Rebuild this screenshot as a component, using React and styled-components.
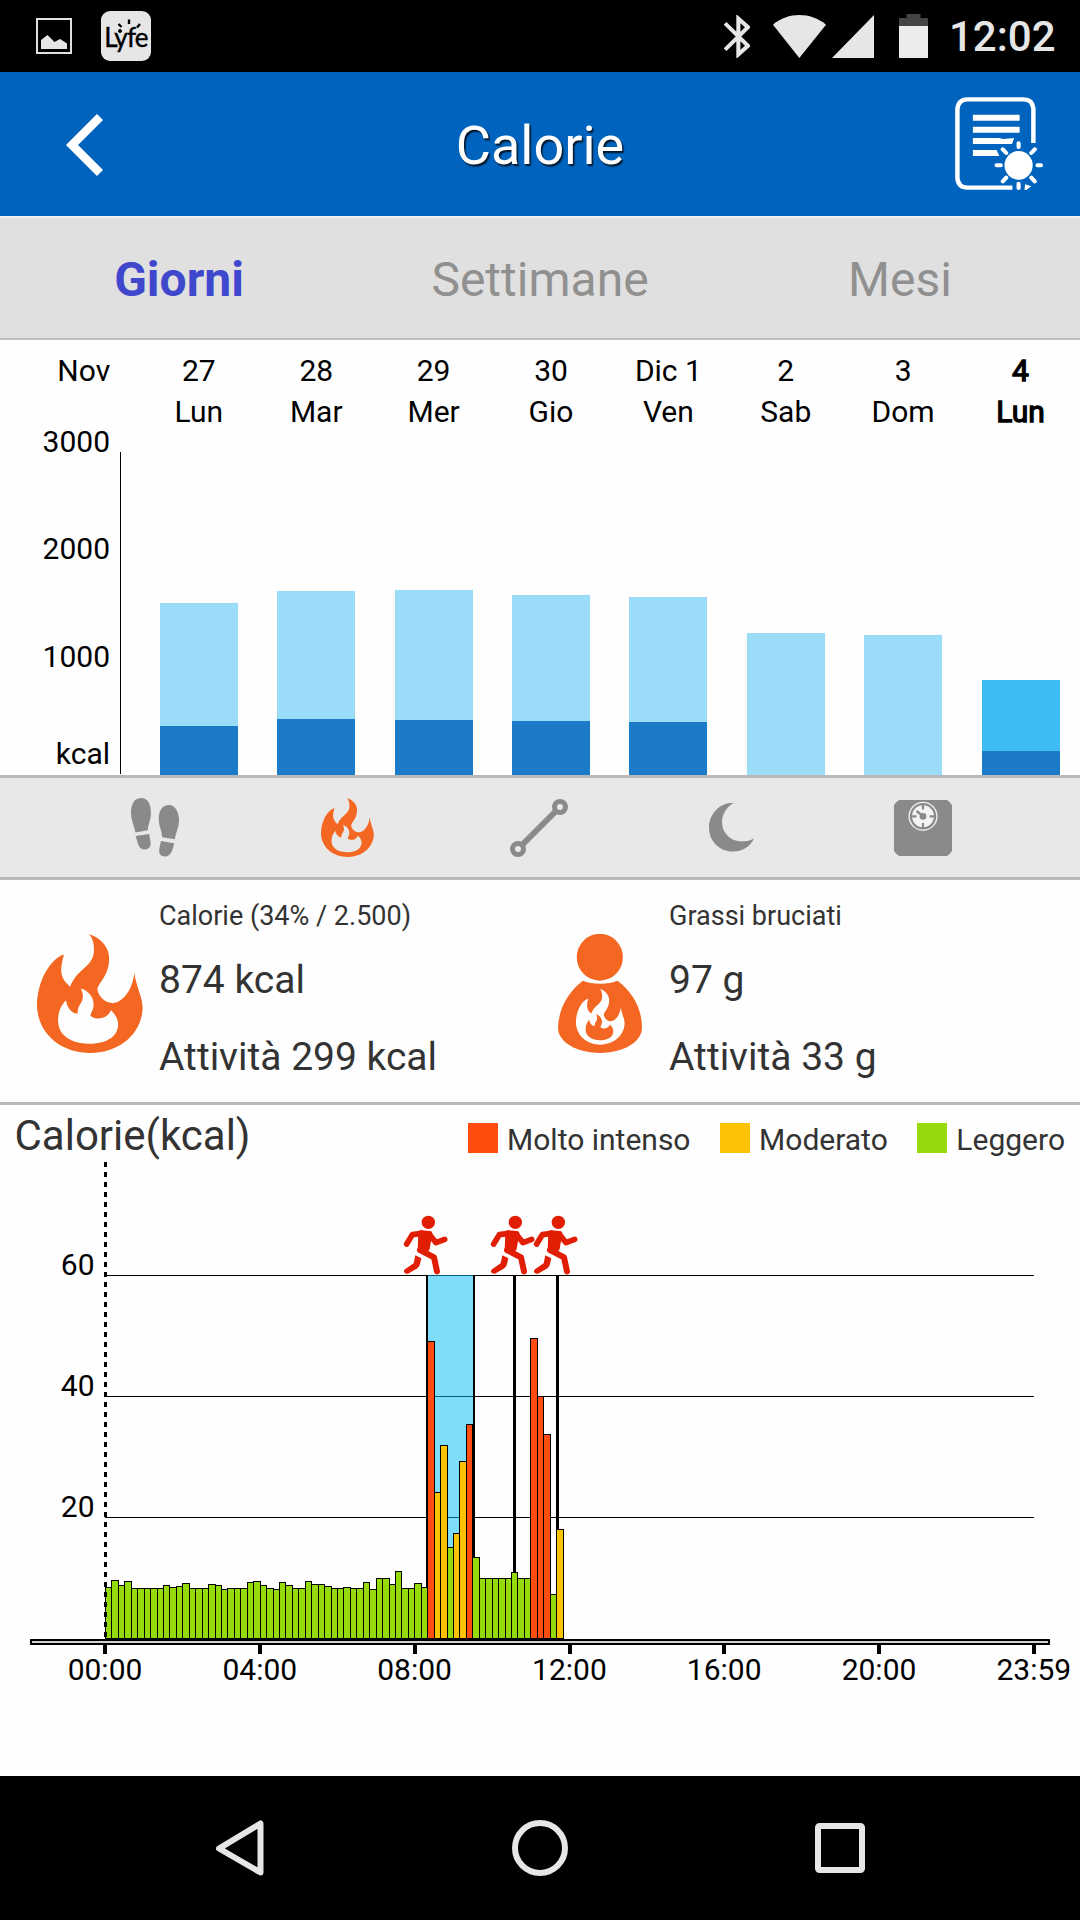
import React from "react";
import styled, { createGlobalStyle } from "styled-components";

const Global = createGlobalStyle`
  * { box-sizing: border-box; }
  body { margin: 0; background: #fff; font-family: Roboto, sans-serif; }
  svg { display: block; flex: none; }
`;

const Screen = styled.div`
  width: 1080px;
  height: 1920px;
  display: flex;
  flex-direction: column;
  background: #fefefe;
  overflow: hidden;
`;

/* ---------- status bar ---------- */
const StatusBar = styled.div`
  height: 72px;
  background: #000;
  display: flex;
  justify-content: space-between;
  padding: 0 25px 0 36px;
`;
const StatusLeft = styled.div`
  display: flex;
  align-items: center;
  gap: 29px;
`;
const StatusRight = styled.div`
  display: flex;
  align-items: center;
`;
const StatusIcon = styled.svg`
  margin-right: ${(p) => p.$gap}px;
`;
const LyfeBadge = styled.div`
  position: relative;
  width: 50px;
  height: 50px;
  border-radius: 9px;
  background: #e6e6e6;
  display: flex;
  justify-content: center;
  padding-top: 9px;
  font-family: Lato, sans-serif;
  font-size: 26px;
  line-height: 34px;
  letter-spacing: -0.8px;
  color: #000;
  -webkit-text-stroke: 0.4px #000;
`;
const Rays = styled.svg`
  position: absolute;
  left: 0;
  top: 0;
`;
const Clock = styled.div`
  font-size: 42px;
  font-weight: 500;
  line-height: 76px;
  padding-top: 2px;
  color: #e6e6e6;
  width: 106px;
`;

/* ---------- header ---------- */
const Header = styled.header`
  height: 146px;
  background: #0063bd;
  border-bottom: 2px solid #f2f2f2;
  display: grid;
  grid-template-columns: 170px 1fr 170px;
  align-items: center;
`;
const Title = styled.h1`
  margin: 0;
  text-align: center;
  color: #fff;
  font-size: 54px;
  font-weight: 400;
  line-height: 64px;
  padding-top: 3px;
  text-shadow: 1.5px 1.5px 1.5px rgba(0, 0, 0, 0.8);
`;
const HeaderSlot = styled.div`
  display: flex;
  justify-content: center;
  padding-left: ${(p) => p.$shift || 0}px;
  padding-top: ${(p) => p.$down || 0}px;
  padding-bottom: ${(p) => p.$up || 0}px;
`;

/* ---------- tabs ---------- */
const Tabs = styled.nav`
  height: 122px;
  background: #e0e0e0;
  border-bottom: 2px solid #bfbfbf;
  display: grid;
  grid-template-columns: repeat(3, 1fr);
`;
const Tab = styled.div`
  text-align: center;
  font-size: 48px;
  line-height: 123px;
  font-weight: ${(p) => (p.$active ? 700 : 400)};
  padding-right: ${(p) => (p.$active ? 2 : 0)}px;
  color: ${(p) => (p.$active ? "#3f48cc" : "#909090")};
`;

/* ---------- daily bars ---------- */
const DailyChart = styled.section`
  height: 435px;
  font-size: 30px;
  color: #000;
`;
const DayHeader = styled.div`
  height: 112px;
  padding-top: 10px;
  display: grid;
  grid-template-columns: 140.2px 939px;
  line-height: 41px;
`;
const MonthLabel = styled.div`
  padding-right: 30px;
  text-align: right;
`;
const DayColumns = styled.div`
  display: grid;
  grid-template-columns: repeat(8, 1fr);
`;
const Day = styled.div`
  text-align: center;
  white-space: nowrap;
  -webkit-text-stroke: ${(p) => (p.$current ? "1.3px #000" : "0")};
`;
const DayPlot = styled.div`
  height: 323px;
  display: grid;
  grid-template-columns: 110px 30.2px 939px;
`;
const Scale = styled.div`
  display: grid;
  grid-template-rows: 107px 108px 97px 36px;
  margin-top: -28px;
  height: 348px;
  line-height: 36px;
  text-align: right;
`;
const AxisLine = styled.div`
  margin-left: 10px;
  border-left: 1px solid #000;
  height: 322px;
`;
const BarColumns = styled(DayColumns)`
  align-items: end;
  justify-items: center;
`;
const Bar = styled.div`
  width: 78px;
  display: flex;
  flex-direction: column;
  justify-content: flex-end;
  height: ${(p) => p.$total}px;
  background: ${(p) => (p.$current ? "#3fbbf4" : "#9bdcf9")};
`;
const ActiveBar = styled.div`
  height: ${(p) => p.$value}px;
  background: #1c7bc9;
`;

/* ---------- metric selector ---------- */
const MetricBar = styled.nav`
  height: 105px;
  background: #e8e8e8;
  border-top: 3px solid #b9b9b9;
  border-bottom: 3px solid #b9b9b9;
  padding: 0 61px 0 59px;
  display: grid;
  grid-template-columns: repeat(5, 1fr);
  align-items: center;
  justify-items: center;
`;

/* ---------- summary ---------- */
const Summary = styled.section`
  height: 225px;
  border-bottom: 3px solid #b9b9b9;
  display: grid;
  grid-template-columns: 510px 570px;
`;
const SummaryItem = styled.div`
  display: grid;
  grid-template-columns: 159px 1fr;
`;
const SummaryIcon = styled.div`
  padding: 53.5px 0 0 21px;
  display: flex;
  justify-content: center;
`;
const SummaryText = styled.div`
  padding-top: 20px;
  color: #333;
  white-space: nowrap;
`;
const SummaryLabel = styled.div`
  font-size: 27px;
  line-height: 32px;
  margin-bottom: 25px;
`;
const SummaryValue = styled.div`
  font-size: 39px;
  line-height: 46px;
  margin-bottom: 31px;
`;

/* ---------- intraday chart ---------- */
const Intraday = styled.section`
  flex: 1;
`;
const ChartHeader = styled.div`
  height: 57px;
  display: flex;
  justify-content: space-between;
  color: #333;
  padding: 6px 15px 0 14.5px;
`;
const ChartTitle = styled.div`
  font-size: 42px;
  line-height: 50px;
`;
const Legend = styled.div`
  display: flex;
  gap: 29.6px;
  padding-top: 12px;
`;
const LegendItem = styled.div`
  display: flex;
  gap: 9px;
  font-size: 30px;
  line-height: 34px;
`;
const Swatch = styled.span`
  width: 30px;
  height: 30px;
  background: ${(p) => p.$color};
`;
const PlotSvg = styled.svg`
  font-size: 30px;
  fill: #000;
`;

/* ---------- navigation ---------- */
const NavBar = styled.footer`
  height: 144px;
  background: #000;
  padding: 0 90px;
  display: grid;
  grid-template-columns: repeat(3, 1fr);
  align-items: center;
  justify-items: center;
`;

const ORANGE = "#f46722";
const GREY = "#8a8a8a";
const RED = "#ff4d10";
const YELLOW = "#fcc305";
const GREEN = "#95db0b";

const FLAME =
  "M258 490C300 505 317 535 317 563C317 617 283 637 283 657C287 680 308 697 328 697C358 695 385 655 390 607C396 650 414 680 414 712C411 790 345 846 262 846C180 846 108 790 108 700C110 630 145 565 186 551C170 610 180 625 204 648C225 590 273 590 273 537C273 515 268 500 258 490Z" +
  "M192 688C174 707 169 728 169 750C170 795 210 818 260 818C305 818 341 800 343 762C343 745 335 730 322 718C318 727 313 735 300 740C290 744 275 745 263 735C263 725 272 718 272 700C272 680 258 660 235 653C238 660 241 667 241 677C241 698 224 702 226 728C210 728 195 712 192 688Z";

const Flame = ({ w, h }) => (
  <svg width={w} height={h} viewBox="108 490 307 356" preserveAspectRatio="none">
    <path d={FLAME} fill={ORANGE} fillRule="evenodd" />
  </svg>
);

const FatBurn = () => (
  <svg width="84" height="119" viewBox="52 490 244 356" preserveAspectRatio="none">
    <ellipse cx="173.5" cy="559.5" rx="67" ry="70" fill={ORANGE} />
    <path
      fill={ORANGE}
      d="M124 630C150 642 200 642 225 630C270 665 296 715 296 770C296 815 240 846 174 846C108 846 52 815 52 770C54 715 80 665 124 630Z"
    />
    <path
      d={FLAME}
      fill="#fff"
      fillRule="evenodd"
      transform="translate(104 654) scale(.4625 .469) translate(-108 -490)"
    />
  </svg>
);

const Footprints = () => (
  <svg width="48" height="58.5" viewBox="383 83 140 176" preserveAspectRatio="none">
    <path
      fill={GREY}
      d="M412 83C432 83 441 100 441 128C441 150 433 160 432 180L396 187C392 165 383 150 383 125C384 98 395 83 412 83ZM397 197L436 191C438 205 441 215 440 225C438 234 430 238 422 238C405 238 402 215 397 197ZM494 104C512 104 523 125 523 150C523 172 514 185 511 207L474 201C473 180 464 170 464 145C464 120 475 104 494 104ZM470 212L509 219C504 240 500 258 483 259C470 259 465 252 465 242C466 230 469 222 470 212Z"
    />
  </svg>
);

const Route = () => (
  <svg width="58" height="58" viewBox="0 0 58 58" fill="none" stroke={GREY}>
    <path d="M12 46L46 12" strokeWidth="6" />
    <circle cx="8" cy="50" r="5.5" strokeWidth="5" />
    <circle cx="50" cy="8" r="5.5" strokeWidth="5" />
  </svg>
);

const Moon = () => (
  <svg width="45" height="48.5" viewBox="492 98 131 145" preserveAspectRatio="none">
    <path
      fill={GREY}
      d="M565 98C520 95 492 135 492 171C492 215 525 243 562 243C590 243 612 228 623 204C610 211 598 213 588 213C555 213 530 188 530 155C530 130 545 107 565 98Z"
    />
  </svg>
);

const BathScale = () => (
  <svg width="58" height="56" viewBox="0 0 58 56">
    <path d="M5 0H53Q56 2 58 5V51Q56 54 53 56H5Q2 54 0 51V5Q2 2 5 0Z" fill={GREY} />
    <circle cx="29" cy="16.3" r="14.6" fill="#efefef" />
    <circle cx="29" cy="16.3" r="13.2" fill={GREY} />
    <circle cx="29" cy="16.3" r="11" fill="#f4f4f4" />
    <g stroke={GREY} strokeWidth="2.2">
      <path d="M29 5V9.5M29 23V28M18 16.3H22.5M35.5 16.3H40" />
      <path d="M22.5 11L29 16" strokeWidth="2.4" />
    </g>
    <circle cx="29" cy="16.3" r="3.4" fill={GREY} />
  </svg>
);

const ReportIcon = () => (
  <svg width="88" height="93" viewBox="1205 292 256 279" preserveAspectRatio="none" fill="none" stroke="#fff">
    <path d="M1433 430V326Q1430 299 1405 299H1241Q1215 299 1212 328V536Q1215 564 1241 564H1372" strokeWidth="13" />
    <path d="M1257 354H1393M1257 390H1393" strokeWidth="18" />
    <path fill="#fff" stroke="none" d="M1257 415H1333L1345 418L1377 415L1371 433H1257ZM1257 451H1326L1334 469H1257Z" />
    <ellipse cx="1390" cy="497" rx="41" ry="43" fill="#fff" stroke="none" />
    <path
      strokeWidth="12"
      strokeLinecap="round"
      d="M1390 431V442M1390 552V565M1326 497H1338M1445 497H1455M1344 449L1354 460M1437 449L1427 460M1344 545L1354 534M1437 545L1427 534"
    />
    <path fill="#fff" stroke="none" d="M1409 554L1427 560L1412 571H1407Z" />
  </svg>
);

const days = [
  ["27", "Lun", 172, 49],
  ["28", "Mar", 184, 56],
  ["29", "Mer", 185, 55],
  ["30", "Gio", 180, 54],
  ["Dic 1", "Ven", 178, 53],
  ["2", "Sab", 142, 0],
  ["3", "Dom", 140, 0],
  ["4", "Lun", 95, 24],
];

/* Bar heights in pixels above the time axis, one per ten minutes. */
const samples = [
  52, 59, 54, 58, 51, 51, 51, 51, 51, 54, 52, 53, 56, 51, 51, 51, 55, 54, 50, 51, 51, 51, 57, 58, 54, 51, 50, 57, 54,
  51, 51, 58, 55, 55, 53, 51, 51, 52, 51, 51, 57, 50, 61, 61, 55, 68, 51, 51, 56, 52, 298, 147, 194, 92, 106, 178, 215,
  82, 61, 61, 61, 61, 61, 67, 61, 61, 301, 243, 205, 45, 110,
];
const intense = new Set([50, 56, 66, 67, 68]);
const moderate = new Set([51, 52, 54, 55, 70]);
const barColor = (i) => (intense.has(i) ? RED : moderate.has(i) ? YELLOW : GREEN);

const BASE = 1639;
const slotX = (i) => Math.round(105 + i * 6.445);

const Runner = ({ dx }) => (
  <g transform={`translate(${380 + dx} 1180) scale(.33333)`} stroke="#e11e04" fill="none" strokeLinecap="round" strokeLinejoin="round">
    <ellipse cx="145" cy="127" rx="20" ry="20" fill="#e11e04" stroke="none" />
    <path d="M80 192L97 164L126 160" strokeWidth="17" />
    <path d="M148 163L168 188L194 178" strokeWidth="17" />
    <path d="M122 158L150 160L142 206L120 212Z" fill="#e11e04" strokeWidth="14" />
    <path d="M120 210L162 232L171 274" strokeWidth="18" />
    <path d="M106 226L124 235L119 256Q117 262 110 266L84 281Q76 283 72 276Q71 270 76 267L101 250Z" fill="#e11e04" stroke="none" />
  </g>
);

const hours = ["00:00", "04:00", "08:00", "12:00", "16:00", "20:00", "23:59"];

const IntradayPlot = () => (
  <PlotSvg width="1080" height="538" viewBox="0 1162 1080 538">
    <g shapeRendering="crispEdges">
      {[1275, 1396, 1517].map((y) => (
        <rect key={y} x="105" y={y} width="929" height="1" />
      ))}
      <rect x="428" y="1275" width="45" height="363" fill="rgba(0,187,243,.5)" />
      <rect x="426" y="1275" width="2" height="363" />
      <rect x="473" y="1275" width="2" height="363" />
      <rect x="513" y="1275" width="3" height="363" />
      <rect x="556" y="1275" width="3" height="363" />
      {samples.map((h, i) => {
        const x = slotX(i);
        const w = slotX(i + 1) - x + 1;
        return (
          <g key={i}>
            <rect x={x} y={BASE - h} width={w} height={h} />
            <rect x={x + 1} y={BASE - h + 1} width={w - 2} height={h - 2} fill={barColor(i)} />
          </g>
        );
      })}
      <path d="M105.5 1162V1639" stroke="#000" strokeWidth="3" strokeDasharray="5 5" />
      <rect x="30" y="1639" width="1020" height="6" />
      <rect x="32" y="1641" width="1016" height="2" fill="#d4d0d4" />
      {hours.map((h, i) => (
        <rect key={h} x={103 + Math.round(i * 154.84)} y="1645" width="4" height="9" />
      ))}
    </g>
    {[["60", 1275], ["40", 1396], ["20", 1517]].map(([t, y]) => (
      <text key={t} x="94.5" y={y} textAnchor="end">{t}</text>
    ))}
    {hours.map((h, i) => (
      <text key={h} x={105 + i * 154.8} y="1680" textAnchor="middle">{h}</text>
    ))}
    <Runner dx={0} />
    <Runner dx={87} />
    <Runner dx={130} />
  </PlotSvg>
);

export default function App() {
  return (
    <>
      <Global />
      <Screen>
        <StatusBar>
          <StatusLeft>
            <svg width="36" height="36" viewBox="0 0 36 36">
              <rect x="1" y="1" width="34" height="34" fill="none" stroke="#e0e0e0" strokeWidth="2" />
              <path d="M5 22L11.5 17L18.5 24L24 21L31 25.5V31H5Z" fill="#e6e6e6" />
            </svg>
            <LyfeBadge>
              Lyfe
              <Rays width="50" height="50" viewBox="0 0 50 50" stroke="#000" strokeWidth="2.4">
                <path d="M17.5 13L20.500 16M28 8.500V13M39 13L36 16.500" />
                <circle cx="19" cy="20" r="1.500" strokeWidth="1" />
              </Rays>
            </LyfeBadge>
          </StatusLeft>
          <StatusRight>
            <StatusIcon $gap={23} width="26" height="43" viewBox="534 44 76 130" preserveAspectRatio="none">
              <path d="M537 69L604 137L576 163V55L604 81L537 149" fill="none" stroke="#e6e6e6" strokeWidth="12" />
            </StatusIcon>
            <StatusIcon $gap={6} width="53" height="43" viewBox="677 42 153 129" preserveAspectRatio="none">
              <path d="M753 171L677 71C720 32.500 786 32.500 830 71Z" fill="#e6e6e6" />
            </StatusIcon>
            <StatusIcon $gap={25} width="42" height="43" viewBox="847 42 123 129" preserveAspectRatio="none">
              <path d="M970 42V171H847Z" fill="#e6e6e6" />
            </StatusIcon>
            <StatusIcon $gap={21} width="29" height="44" viewBox="0 0 29 44">
              <path d="M7.500 0H21.500V4H29V13H0V4H7.500Z" fill="#444" />
              <path d="M0 12H29V44H0Z" fill="#ececec" />
            </StatusIcon>
            <Clock>12:02</Clock>
          </StatusRight>
        </StatusBar>

        <Header>
          <HeaderSlot $down={1}>
            <svg width="38" height="62" viewBox="0 0 38 62">
              <path d="M34 3L6 31L34 59" fill="none" stroke="#fff" strokeWidth="8.500" />
            </svg>
          </HeaderSlot>
          <Title>Calorie</Title>
          <HeaderSlot $shift={8} $up={2}>
            <ReportIcon />
          </HeaderSlot>
        </Header>

        <Tabs>
          <Tab $active>Giorni</Tab>
          <Tab>Settimane</Tab>
          <Tab>Mesi</Tab>
        </Tabs>

        <DailyChart>
          <DayHeader>
            <MonthLabel>Nov</MonthLabel>
            <DayColumns>
              {days.map(([date, name], i) => (
                <Day key={date} $current={i === 7}>
                  <div>{date}</div>
                  <div>{name}</div>
                </Day>
              ))}
            </DayColumns>
          </DayHeader>
          <DayPlot>
            <Scale>
              <span>3000</span>
              <span>2000</span>
              <span>1000</span>
              <span>kcal</span>
            </Scale>
            <AxisLine />
            <BarColumns>
              {days.map(([date, , total, active], i) => (
                <Bar key={date} $total={total} $current={i === 7}>
                  <ActiveBar $value={active} />
                </Bar>
              ))}
            </BarColumns>
          </DayPlot>
        </DailyChart>

        <MetricBar>
          <Footprints />
          <Flame w={53} h={59} />
          <Route />
          <Moon />
          <BathScale />
        </MetricBar>

        <Summary>
          <SummaryItem>
            <SummaryIcon>
              <Flame w={106} h={119} />
            </SummaryIcon>
            <SummaryText>
              <SummaryLabel>Calorie (34% / 2.500)</SummaryLabel>
              <SummaryValue>874 kcal</SummaryValue>
              <SummaryValue>Attività 299 kcal</SummaryValue>
            </SummaryText>
          </SummaryItem>
          <SummaryItem>
            <SummaryIcon>
              <FatBurn />
            </SummaryIcon>
            <SummaryText>
              <SummaryLabel>Grassi bruciati</SummaryLabel>
              <SummaryValue>97 g</SummaryValue>
              <SummaryValue>Attività 33 g</SummaryValue>
            </SummaryText>
          </SummaryItem>
        </Summary>

        <Intraday>
          <ChartHeader>
            <ChartTitle>Calorie(kcal)</ChartTitle>
            <Legend>
              <LegendItem><Swatch $color={RED} />Molto intenso</LegendItem>
              <LegendItem><Swatch $color={YELLOW} />Moderato</LegendItem>
              <LegendItem><Swatch $color={GREEN} />Leggero</LegendItem>
            </Legend>
          </ChartHeader>
          <IntradayPlot />
        </Intraday>

        <NavBar>
          <svg width="48" height="56" viewBox="0 0 48 56">
            <path d="M3 28.500L44.500 3.500V52.500Z" fill="none" stroke="#e6e6e6" strokeWidth="6" strokeLinejoin="round" />
          </svg>
          <svg width="56" height="56" viewBox="0 0 56 56">
            <circle cx="28" cy="28" r="25" fill="none" stroke="#e6e6e6" strokeWidth="6" />
          </svg>
          <svg width="50" height="50" viewBox="0 0 50 50">
            <rect x="3" y="3" width="44" height="44" rx="1.500" fill="none" stroke="#e6e6e6" strokeWidth="6" />
          </svg>
        </NavBar>
      </Screen>
    </>
  );
}
